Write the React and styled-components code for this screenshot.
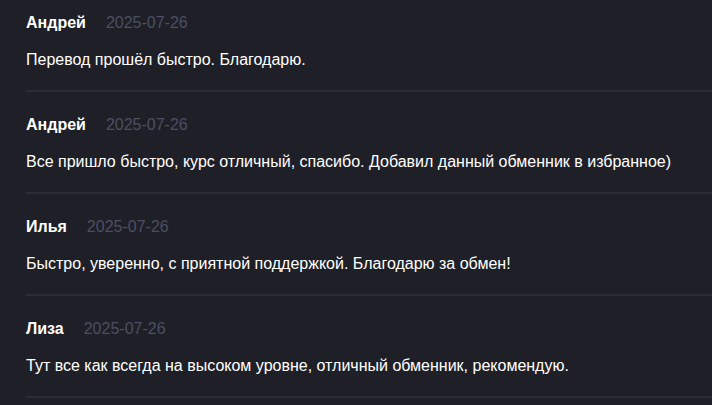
import React from 'react';
import styled, { createGlobalStyle } from 'styled-components';

const GlobalStyle = createGlobalStyle`
  html, body {
    margin: 0;
    padding: 0;
    background: #1f2027;
  }
  body {
    font-family: "Liberation Sans", Arial, sans-serif;
  }
`;

const List = styled.div`
  display: flex;
  flex-direction: column;
  padding-left: 26px;
  margin-top: -10px;
`;

const Review = styled.div`
  display: flex;
  flex-direction: column;
  gap: 17px;
  padding: 23px 0 20px;
  border-bottom: 2px solid #2b2c34;
`;

const Head = styled.div`
  display: flex;
  align-items: center;
  gap: 20px;
  height: 20px;
`;

const Name = styled.span`
  font-size: 16px;
  font-weight: 700;
  color: #ffffff;
`;

const Date = styled.span`
  font-size: 16px;
  color: #4b4f62;
`;

const Text = styled.p`
  margin: 0;
  font-size: 16px;
  line-height: 20px;
  color: #ffffff;
`;

const reviews = [
  { name: 'Андрей', date: '2025-07-26', text: 'Перевод прошёл быстро. Благодарю.' },
  { name: 'Андрей', date: '2025-07-26', text: 'Все пришло быстро, курс отличный, спасибо. Добавил данный обменник в избранное)' },
  { name: 'Илья', date: '2025-07-26', text: 'Быстро, уверенно, с приятной поддержкой. Благодарю за обмен!' },
  { name: 'Лиза', date: '2025-07-26', text: 'Тут все как всегда на высоком уровне, отличный обменник, рекомендую.' },
];

const App = () => (
  <>
    <GlobalStyle />
    <List>
      {reviews.map((r, i) => (
        <Review key={i}>
          <Head>
            <Name>{r.name}</Name>
            <Date>{r.date}</Date>
          </Head>
          <Text>{r.text}</Text>
        </Review>
      ))}
    </List>
  </>
);

export default App;
